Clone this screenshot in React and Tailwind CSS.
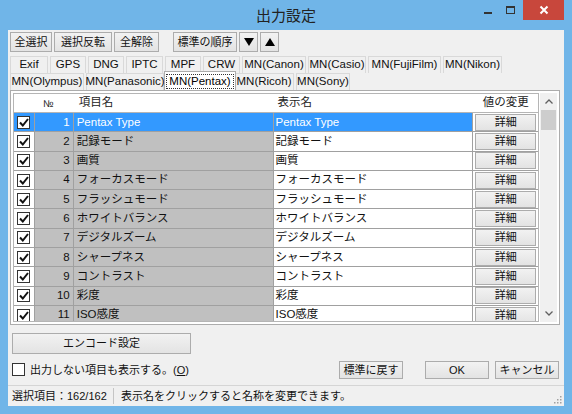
import React from "react";

const FONT = { fontFamily: '"Liberation Sans", "Noto Sans CJK JP", sans-serif' };

const rows = [
  "Pentax Type",
  "記録モード",
  "画質",
  "フォーカスモード",
  "フラッシュモード",
  "ホワイトバランス",
  "デジタルズーム",
  "シャープネス",
  "コントラスト",
  "彩度",
  "ISO感度",
];

const tabs1 = [
  ["Exif", 38], ["GPS", 36], ["DNG", 36], ["IPTC", 37], ["MPF", 36], ["CRW", 37],
  ["MN(Canon)", 64], ["MN(Casio)", 58], ["MN(FujiFilm)", 73], ["MN(Nikon)", 59],
];
const tabs2 = [
  ["MN(Olympus)", 74], ["MN(Panasonic)", 78], ["MN(Pentax)", 68], ["MN(Ricoh)", 60], ["MN(Sony)", 54],
];

function Btn({ children, className = "" }) {
  return (
    <div
      className={`flex items-center justify-center border border-[#acacac] bg-gradient-to-b from-[#f2f2f2] to-[#e3e3e3] text-[11px] text-[#111] leading-none ${className}`}
    >
      {children}
    </div>
  );
}

function Check({ checked }) {
  return (
    <div className="w-[13px] h-[13px] border border-[#333] bg-white flex items-center justify-center">
      {checked && (
        <svg width="10" height="9" viewBox="0 0 10 9">
          <path d="M1 4.5 L3.8 7.5 L9 1" fill="none" stroke="#111" strokeWidth="2" />
        </svg>
      )}
    </div>
  );
}

function Tab({ label, w, active }) {
  if (active) {
    return (
      <div
        className="relative z-10 -mt-[2px] h-[19px] -mx-[2px] flex items-center justify-center bg-white border border-b-0 border-[#acacac] text-[11.5px]"
        style={{ width: w + 4 }}
      >
        <span className="px-[2px] border border-dotted border-[#333] leading-[13px]">{label}</span>
      </div>
    );
  }
  return (
    <div
      className="h-[17px] flex items-center justify-center bg-[#f0f0f0] border border-b-0 border-[#d9d9d9] text-[11.5px] mr-[2px] text-[#111]"
      style={{ width: w }}
    >
      {label}
    </div>
  );
}

export default function App() {
  return (
    <div className="w-[572px] h-[414px] bg-[#70b5e8] flex flex-col overflow-hidden" style={FONT}>
      {/* title bar */}
      <div className="h-[30px] flex items-start relative">
        <div className="flex-1 text-center text-[15px] text-[#222] pt-[5px]">出力設定</div>
        <div className="absolute right-[8px] top-0 flex items-start">
          <div className="w-[22px] h-[20px] flex items-center justify-center">
            <div className="w-[8px] h-[2px] bg-[#333] mt-[6px]" />
          </div>
          <div className="w-[22px] h-[20px] flex items-center justify-center">
            <div className="w-[9px] h-[8px] border border-[#333] border-t-2" />
          </div>
          <div className="w-[41px] h-[20px] bg-[#c8473c] flex items-center justify-center ml-[2px]">
            <svg width="10" height="10" viewBox="0 0 10 10">
              <path d="M1.5 1.5 L8.5 8.5 M8.5 1.5 L1.5 8.5" stroke="#fff" strokeWidth="2" />
            </svg>
          </div>
        </div>
      </div>

      {/* client */}
      <div className="mx-[8px] mb-[8px] flex-1 bg-[#f0f0f0] flex flex-col">
        {/* toolbar */}
        <div className="flex pt-[2px] pl-[2px] h-[22px]">
          <Btn className="w-[42px] h-[20px] mr-[2px]">全選択</Btn>
          <Btn className="w-[58px] h-[20px] mr-[2px]">選択反転</Btn>
          <Btn className="w-[45px] h-[20px] mr-[14px]">全解除</Btn>
          <Btn className="w-[64px] h-[20px] mr-[2px]">標準の順序</Btn>
          <Btn className="w-[19px] h-[20px] mr-[2px]">
            <svg width="10" height="8" viewBox="0 0 10 8"><path d="M0 0 H10 L5 8 Z" fill="#000" /></svg>
          </Btn>
          <Btn className="w-[19px] h-[20px]">
            <svg width="10" height="8" viewBox="0 0 10 8"><path d="M0 8 H10 L5 0 Z" fill="#000" /></svg>
          </Btn>
        </div>

        {/* tabs */}
        <div className="pl-[2px] mt-[4px] flex flex-col">
          <div className="flex h-[17px]">
            {tabs1.map(([l, w]) => <Tab key={l} label={l} w={w} />)}
          </div>
          <div className="flex h-[17px] items-end">
            {tabs2.map(([l, w]) => <Tab key={l} label={l} w={w} active={l === "MN(Pentax)"} />)}
          </div>
        </div>

        {/* panel */}
        <div className="ml-[2px] w-[550px] h-[235px] bg-white border border-[#acacac] p-[2px] flex">
          <div className="w-[527px] border border-[#b5b5b5] overflow-hidden flex flex-col text-[11.5px]">
            {/* header */}
            <div className="flex h-[19px] shrink-0 bg-white border-b border-[#b5b5b5] text-[#222] items-center">
              <div className="w-[21px]" />
              <div className="w-[39px] pl-[8px] text-[10px]">№</div>
              <div className="w-[201px] pl-[5px]">項目名</div>
              <div className="w-[201px] pl-[4px]">表示名</div>
              <div className="w-[65px] text-center">値の変更</div>
            </div>
            {rows.map((r, i) => {
              const sel = i === 0;
              return (
                <div key={i} className="flex h-[19.3px] shrink-0 border-b border-[#a0a0a0]">
                  <div className={`w-[21px] flex items-center justify-center border-r border-[#a0a0a0] ${sel ? "bg-[#3399ff]" : "bg-white"}`}>
                    <Check checked />
                  </div>
                  <div className={`w-[39px] flex items-center justify-end pr-[3px] border-r border-[#a0a0a0] ${sel ? "bg-[#3399ff] text-white" : "bg-[#c0c0c0] text-[#111]"}`}>
                    {i + 1}
                  </div>
                  <div className={`w-[201px] flex items-center pl-[3px] border-r border-[#a0a0a0] whitespace-nowrap ${sel ? "bg-[#3399ff] text-white" : "bg-[#c0c0c0] text-[#111]"}`}>
                    {r}
                  </div>
                  <div className={`w-[201px] flex items-center pl-[2px] border-r border-[#a0a0a0] whitespace-nowrap ${sel ? "bg-[#3399ff] text-white" : "bg-white text-[#111]"}`}>
                    {r}
                  </div>
                  <div className="w-[65px] flex items-center justify-center bg-white">
                    <Btn className={`w-[61px] h-[17px] ${sel ? "border-[#3c8fd9]" : ""}`}>詳細</Btn>
                  </div>
                </div>
              );
            })}
          </div>
          {/* scrollbar */}
          <div className="w-[17px] ml-[1px] bg-[#f0f0f0] flex flex-col items-center">
            <div className="h-[17px] flex items-center justify-center">
              <svg width="8" height="5" viewBox="0 0 8 5"><path d="M0.5 4.5 L4 1 L7.5 4.5" fill="none" stroke="#606060" strokeWidth="1.3" /></svg>
            </div>
            <div className="w-[15px] h-[20px] bg-[#cdcdcd]" />
            <div className="flex-1" />
            <div className="h-[17px] flex items-center justify-center">
              <svg width="8" height="5" viewBox="0 0 8 5"><path d="M0.5 0.5 L4 4 L7.5 0.5" fill="none" stroke="#606060" strokeWidth="1.3" /></svg>
            </div>
          </div>
        </div>

        {/* bottom area */}
        <div className="flex-1 flex flex-col pl-[4px]">
          <Btn className="w-[179px] h-[21px] mt-[8px]">エンコード設定</Btn>
          <div className="flex items-end mt-[7px]">
            <div className="flex items-center text-[11px] text-[#111] mb-[1px]">
              <div className="w-[13px] h-[13px] border border-[#333] bg-white mr-[5px]" />
              <span>出力しない項目も表示する。(<span className="underline">O</span>)</span>
            </div>
            <div className="flex-1" />
            <Btn className="w-[64px] h-[18px] mr-[22px]">標準に戻す</Btn>
            <Btn className="w-[64px] h-[18px] mr-[6px]">OK</Btn>
            <Btn className="w-[64px] h-[18px] mr-[5px]">キャンセル</Btn>
          </div>
        </div>

        {/* status bar */}
        <div className="h-[21px] shrink-0 border-t border-[#d5d5d5] flex items-center text-[11px] text-[#111] relative">
          <div className="pl-[4px] pr-[6px] w-[105px] whitespace-nowrap">選択項目：162/162</div>
          <div className="w-px h-[16px] bg-[#c5c5c5] mr-[7px]" />
          <div className="whitespace-nowrap">表示名をクリックすると名称を変更できます。</div>
          <svg className="absolute right-[2px] bottom-[2px]" width="10" height="10" viewBox="0 0 10 10">
            <g fill="#a0a0a0">
              <rect x="8" y="2" width="1.5" height="1.5" />
              <rect x="5" y="5" width="1.5" height="1.5" />
              <rect x="8" y="5" width="1.5" height="1.5" />
              <rect x="2" y="8" width="1.5" height="1.5" />
              <rect x="5" y="8" width="1.5" height="1.5" />
              <rect x="8" y="8" width="1.5" height="1.5" />
            </g>
          </svg>
        </div>
      </div>
    </div>
  );
}
